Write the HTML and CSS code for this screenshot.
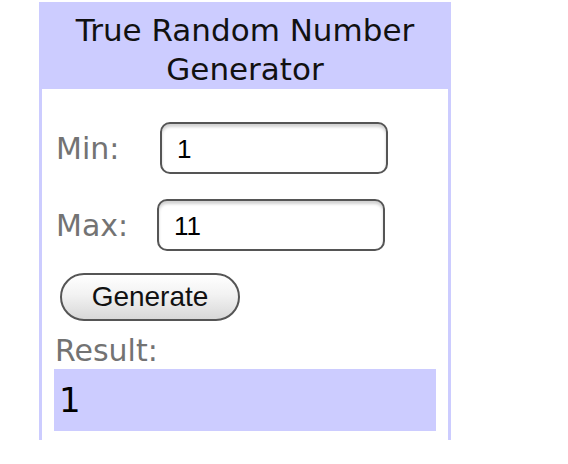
FILE: index.html
```html
<!DOCTYPE html>
<html>
<head>
<meta charset="utf-8">
<link rel="stylesheet" href="styles.css">
</head>
<body>
<div class="page">
  <div class="widget">
    <div class="header">True Random Number Generator</div>
    <div class="content">
      <div class="row">
        <label class="label label-min">Min:</label>
        <input class="field" type="text" value="1">
      </div>
      <div class="row row-max">
        <label class="label label-max">Max:</label>
        <input class="field" type="text" value="11">
      </div>
      <button class="generate" type="button">Generate</button>
      <div class="result-label">Result:</div>
      <div class="result">1</div>
    </div>
  </div>
</div>
</body>
</html>
```

FILE: styles.css
```css
html, body {
  margin: 0;
  padding: 0;
  background: #ffffff;
}

.page {
  padding: 2px 0 0 39px;
}

.widget {
  width: 412px;
  font-family: "DejaVu Sans", sans-serif;
}

.header {
  background: #ccccff;
  color: #111111;
  font-size: 31px;
  line-height: 39px;
  text-align: center;
  height: 87px;
  box-sizing: border-box;
  padding: 9px 30px 0;
}

.content {
  border-left: 3px solid #ccccff;
  border-right: 3px solid #ccccff;
  padding: 33px 12px 9px 12px;
}

.row {
  display: flex;
  align-items: center;
  height: 52px;
}

.row-max {
  margin-top: 25px;
}

.label {
  font-size: 30px;
  color: #737373;
  padding-left: 2px;
  box-sizing: border-box;
}

.label-min {
  width: 106px;
}

.label-max {
  width: 103px;
}

.field {
  width: 228px;
  height: 52px;
  box-sizing: border-box;
  border: 2px solid #555555;
  border-radius: 10px;
  padding: 2px 0 0 15px;
  font-family: "Liberation Sans", Arial, sans-serif;
  font-size: 26px;
  color: #000000;
  background: #ffffff;
  box-shadow: inset 0 3px 3px rgba(0, 0, 0, 0.18);
  outline: none;
}

.generate {
  display: block;
  margin: 22px 0 0 6px;
  width: 180px;
  height: 48px;
  box-sizing: border-box;
  border: 2px solid #555555;
  border-radius: 24px;
  background: linear-gradient(#ffffff 0%, #f2f2f2 45%, #d8d8d8 100%);
  font-family: "Liberation Sans", Arial, sans-serif;
  font-size: 28px;
  color: #111111;
  padding: 0;
}

.result-label {
  margin-top: 12px;
  font-size: 30px;
  line-height: 36px;
  color: #737373;
  padding-left: 1px;
}

.result {
  height: 62px;
  background: #ccccff;
  font-size: 34px;
  line-height: 62px;
  color: #000000;
  padding-left: 5px;
}
```
